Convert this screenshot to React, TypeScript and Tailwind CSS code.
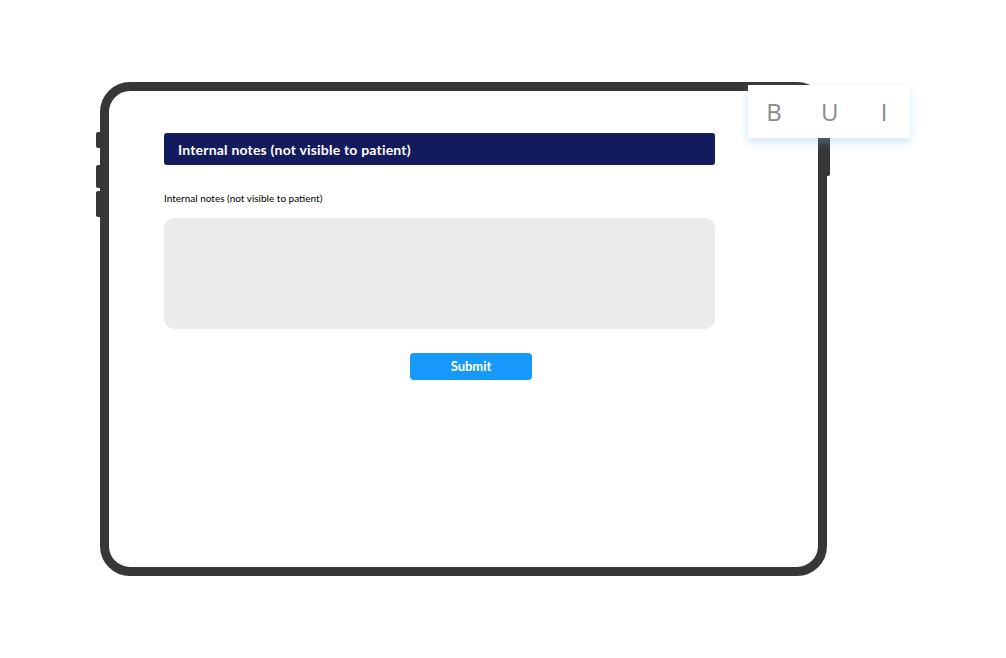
const App: React.FC = () => {
  return (
    <div
      className="relative w-[1006px] h-[658px] bg-white overflow-hidden"
      style={{ fontFamily: "Lato, 'Open Sans', sans-serif" }}
    >
      {/* tablet */}
      <div className="pl-[100px] pt-[82px]">
        <div className="relative w-[727px] h-[494px] rounded-[30px] border-[9px] border-[#373737] bg-white">
          {/* side buttons */}
          <span className="absolute -left-[13px] top-[41px] w-[4px] h-[16px] rounded-l-[2px] bg-[#373737]" />
          <span className="absolute -left-[13px] top-[74px] w-[4px] h-[23px] rounded-l-[2px] bg-[#373737]" />
          <span className="absolute -left-[13px] top-[100px] w-[4px] h-[26px] rounded-l-[2px] bg-[#373737]" />
          <span className="absolute -right-[12px] top-[20px] w-[3px] h-[65px] rounded-r-[2px] bg-[#373737]" />

          <div className="flex flex-col pl-[55px] pt-[42px] w-[606px]">
            <div className="h-[32px] flex items-center rounded-[3px] bg-[#131b5c] pl-[14px] text-white text-[14px] font-bold tracking-[0.2px]">
              Internal notes (not visible to patient)
            </div>
            <label className="mt-[28px] text-[10px] text-black leading-none">
              Internal notes (not visible to patient)
            </label>
            <div className="mt-[15px] h-[111px] rounded-[10px] bg-[#ebebeb]" />
            <div className="flex pl-[246px] mt-[24px]">
              <button className="w-[122px] h-[27px] rounded-[4px] bg-[#1799fc] text-white text-[13px] font-bold">
                Submit
              </button>
            </div>
          </div>
        </div>
      </div>

      {/* formatting toolbar */}
      <div className="absolute left-[748px] top-[85px] w-[162px] h-[53px] bg-white flex items-center justify-between px-[18px] shadow-[0_4px_8px_rgba(110,185,240,0.35)]">
        <span className="w-[16px] text-center text-[24px] text-[#8a8a8a]" style={{ fontFamily: "'Open Sans', sans-serif" }}>B</span>
        <span className="w-[16px] text-center text-[24px] text-[#8a8a8a]" style={{ fontFamily: "'Open Sans', sans-serif" }}>U</span>
        <span className="w-[16px] text-center text-[24px] text-[#8a8a8a]" style={{ fontFamily: "'Open Sans', sans-serif" }}>I</span>
      </div>
    </div>
  );
};

export default App;
